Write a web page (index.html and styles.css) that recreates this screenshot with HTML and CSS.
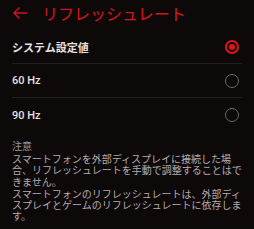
FILE: index.html
```html
<!DOCTYPE html>
<html lang="ja">
<head>
    <meta charset="UTF-8">
    <title>リフレッシュレート</title>
    <link rel="stylesheet" href="styles.css">
</head>
<body>
    <div class="header">
        <svg class="back" width="16" height="14" viewBox="0 0 16 14">
            <path d="M15 7H2M7.5 1.5L2 7l5.5 5.5" fill="none" stroke="#d8141c" stroke-width="1.4"/>
        </svg>
        <h1>リフレッシュレート</h1>
    </div>

    <div class="options">
        <div class="option">
            <span class="label strong">システム設定値</span>
            <span class="radio checked"></span>
        </div>
        <div class="option">
            <span class="label">60 Hz</span>
            <span class="radio"></span>
        </div>
        <div class="option">
            <span class="label">90 Hz</span>
            <span class="radio"></span>
        </div>
    </div>

    <div class="note">
        <h2>注意</h2>
        <p>スマートフォンを外部ディスプレイに接続した場<br>合、リフレッシュレートを手動で調整することはで<br>きません。</p>
        <p>スマートフォンのリフレッシュレートは、外部ディ<br>スプレイとゲームのリフレッシュレートに依存しま<br>す。</p>
    </div>
</body>
</html>
```

FILE: styles.css
```css
* {
    margin: 0;
    padding: 0;
    box-sizing: border-box;
}

body {
    background: #0e0909;
    color: #e6e2e2;
    font-family: 'Noto Sans CJK JP', 'Noto Sans', sans-serif;
    width: 254px;
    height: 229px;
    overflow: hidden;
}

.header {
    height: 30px;
    display: flex;
    align-items: center;
    padding: 0 0 4px 12px;
}

.back {
    display: block;
    margin-right: 14px;
}

.header h1 {
    color: #d8141c;
    font-size: 16px;
    font-weight: 400;
    line-height: 20px;
}

.options {
    padding: 0 12px;
}

.option {
    height: 34px;
    display: flex;
    align-items: center;
    justify-content: space-between;
    border-bottom: 1px solid #241c1c;
}

.option:last-child {
    border-bottom: none;
}

.label {
    font-size: 11px;
    font-family: 'Roboto', 'Noto Sans CJK JP', sans-serif;
    font-weight: 500;
}

.label.strong {
    font-family: 'Noto Sans CJK JP', sans-serif;
    font-weight: 700;
}

.radio {
    width: 14px;
    height: 14px;
    margin-right: 3px;
    border-radius: 50%;
    border: 1.3px solid #6e6a6a;
    display: flex;
    align-items: center;
    justify-content: center;
}

.radio.checked {
    border: 2px solid #e0141c;
}

.radio.checked::after {
    content: "";
    width: 6px;
    height: 6px;
    border-radius: 50%;
    background: #e0141c;
}

/* 注意書き: 行間が詰まっているので欧文フォントの行高で組む */
.note {
    padding: 9px 0 0 12px;
    color: #b4acac;
    font-family: 'Liberation Sans', 'Noto Sans CJK JP', sans-serif;
    font-size: 10px;
    line-height: 11.2px;
    white-space: nowrap;
}

.note h2 {
    font-size: 10px;
    font-weight: 400;
    color: #9e9696;
    margin-bottom: 2px;
}

.note p {
    margin-bottom: 1px;
}
```
